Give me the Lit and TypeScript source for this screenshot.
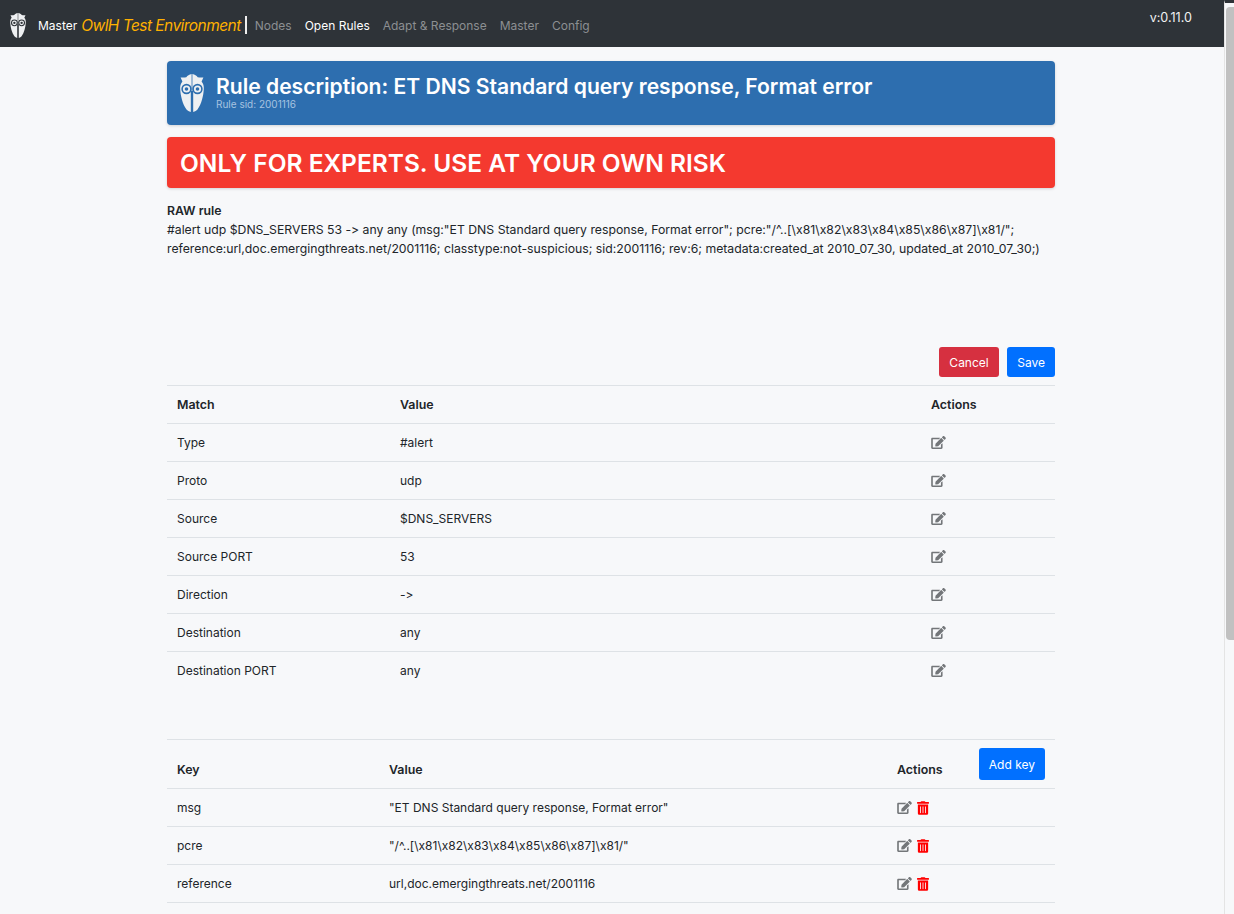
import {LitElement, html, css, svg} from "lit";
import {customElement} from "lit/decorators.js";

const editIcon = html`<svg class="icon edit" viewBox="0 0 576 512"><path fill="currentColor" d="M402.6 83.2l90.2 90.2c3.8 3.8 3.8 10 0 13.8L274.4 405.6l-92.8 10.3c-12.4 1.4-22.9-9.1-21.5-21.5l10.3-92.8L388.8 83.2c3.8-3.8 10-3.8 13.8 0zm162-22.9l-48.8-48.8c-15.2-15.2-39.9-15.2-55.2 0l-35.4 35.4c-3.8 3.8-3.8 10 0 13.8l90.2 90.2c3.8 3.8 10 3.8 13.8 0l35.4-35.4c15.2-15.3 15.2-40 0-55.2zM384 346.2V448H64V128h229.8c3.2 0 6.2-1.3 8.5-3.5l40-40c7.6-7.6 2.2-20.5-8.5-20.5H48C21.5 64 0 85.5 0 112v352c0 26.5 21.5 48 48 48h352c26.5 0 48-21.5 48-48V306.2c0-10.7-12.9-16-20.5-8.5l-40 40c-2.2 2.3-3.5 5.3-3.5 8.5z"/></svg>`;

const trashIcon = html`<svg class="icon trash" viewBox="0 0 448 512"><path fill="currentColor" d="M32 464a48 48 0 0 0 48 48h288a48 48 0 0 0 48-48V128H32zm272-256a16 16 0 0 1 32 0v224a16 16 0 0 1-32 0zm-96 0a16 16 0 0 1 32 0v224a16 16 0 0 1-32 0zm-96 0a16 16 0 0 1 32 0v224a16 16 0 0 1-32 0zM432 32H312l-9.4-18.7A24 24 0 0 0 281.1 0H166.8a23.72 23.72 0 0 0-21.4 13.3L136 32H16A16 16 0 0 0 0 48v32a16 16 0 0 0 16 16h416a16 16 0 0 0 16-16V48a16 16 0 0 0-16-16z"/></svg>`;

// owl helmet, bg is the colour behind it so the eyes and slit look cut out
const owlHalf = (bg: string) => svg`
  <path fill="#eef0f2" d="M11.6 0C9.2 0.4 7.5 1.6 6.3 3.2C4.5 3.6 2.5 3.6 0.6 3.4L2.4 7.4C0.6 9.5 0 12 0.2 15C0.6 22 2.5 30 6.5 35.5C7.5 36.8 9 37.5 10.8 38V17H11.6z"/>
  <circle cx="6.5" cy="15" r="5.2" fill=${bg}/>
  <circle cx="6.5" cy="15" r="3.6" fill="#eef0f2"/>
  <circle cx="6.5" cy="15" r="1.8" fill=${bg}/>
`;

const owl = (cls: string, bg: string) => html`<svg class=${cls} viewBox="0 0 24 38">
  ${owlHalf(bg)}
  ${svg`<g transform="translate(24) scale(-1 1)">${owlHalf(bg)}</g>`}
</svg>`;

const matches = [
  ["Type", "#alert"],
  ["Proto", "udp"],
  ["Source", "$DNS_SERVERS"],
  ["Source PORT", "53"],
  ["Direction", "->"],
  ["Destination", "any"],
  ["Destination PORT", "any"],
];

const keys = [
  ["msg", `"ET DNS Standard query response, Format error"`],
  ["pcre", `"/^..[\\x81\\x82\\x83\\x84\\x85\\x86\\x87]\\x81/"`],
  ["reference", "url,doc.emergingthreats.net/2001116"],
];

@customElement("app-root")
export class AppRoot extends LitElement {
  static styles = css`
    :host {
      display: block;
      height: 914px;
      overflow: hidden;
      background: #f7f8fa;
      color: #212529;
      font-family: Inter, "Liberation Sans", sans-serif;
      font-size: 12px;
      line-height: 19px;
      font-variant-ligatures: none;
      font-feature-settings: "calt" 0;
    }
    .page {
      width: 1224px;
    }
    .nav {
      display: flex;
      align-items: center;
      box-sizing: border-box;
      height: 47px;
      padding: 3px 0 0 10px;
      background: #2e3338;
      color: #fff;
    }
    .nav-owl {
      width: 16px;
      height: 25px;
      margin-right: 12px;
    }
    .env {
      font-style: italic;
      font-size: 15.5px;
      letter-spacing: -0.55px;
      color: #ffb000;
      margin-left: 4px;
    }
    .sep {
      margin: 0 8px 0 4px;
      width: 2px;
      height: 18px;
      background: #eee;
    }
    .link {
      color: #8c8f92;
      margin-right: 13px;
    }
    .link.active {
      color: #fff;
    }
    .version {
      margin-left: auto;
      margin-right: 32px;
      margin-top: -15px;
      font-size: 12.6px;
      color: #f2f2f2;
    }
    .content {
      width: 888px;
      margin-left: 167px;
      padding-top: 14px;
    }
    .banner {
      display: flex;
      align-items: center;
      height: 64px;
      background: #2d6eaf;
      border-radius: 4px;
      box-shadow: 0 1px 3px rgba(0, 0, 0, 0.15);
      padding-left: 13px;
      color: #fff;
    }
    .banner-owl {
      width: 24px;
      height: 38px;
      margin-right: 12px;
    }
    .banner h1 {
      margin: -2px 0 0;
      font-size: 21.1px;
      font-weight: 600;
      line-height: 24px;
    }
    .banner small {
      display: block;
      font-size: 10px;
      line-height: 11px;
      color: #a6c3e0;
    }
    .warning {
      margin-top: 12px;
      box-sizing: border-box;
      height: 51px;
      display: flex;
      align-items: center;
      padding: 1px 0 0 13px;
      background: #f4392f;
      border-radius: 4px;
      color: #fff;
      font-size: 24.5px;
      font-weight: 600;
      box-shadow: 0 1px 3px rgba(0, 0, 0, 0.15);
    }
    .raw {
      margin-top: 13px;
      height: 146px;
      font-size: 12.25px;
    }
    .raw b {
      display: block;
      font-weight: 600;
    }
    .toolbar {
      display: flex;
      justify-content: flex-end;
      gap: 8px;
      margin-bottom: 8px;
    }
    .btn {
      display: inline-flex;
      align-items: center;
      height: 30px;
      padding: 0 10px;
      border: none;
      border-radius: 3px;
      color: #fff;
      font: inherit;
    }
    .btn.red {
      background: #d63040;
      padding: 0 10.5px;
    }
    .btn.blue {
      background: #0170ff;
    }
    table {
      width: 100%;
      border-collapse: collapse;
      table-layout: fixed;
    }
    th,
    td {
      height: 37px;
      padding: 0 10px;
      border-top: 1px solid #dee2e6;
      text-align: left;
      vertical-align: middle;
    }
    th {
      font-weight: 600;
      font-size: 12.4px;
    }
    .keys {
      margin-top: 50px;
      border-bottom: 1px solid #dee2e6;
    }
    .keys th {
      box-sizing: border-box;
      height: 49px;
      padding-top: 10px;
      position: relative;
    }
    .add {
      position: absolute;
      top: 8px;
      right: 10px;
      height: 32px;
      font-size: 12px;
      font-weight: 400;
    }
    .icon {
      display: inline-block;
      vertical-align: middle;
      height: 13px;
      margin-top: -2px;
    }
    .edit {
      width: 15px;
      color: #737679;
    }
    .trash {
      width: 12px;
      height: 14px;
      margin-left: 5px;
      color: #ff0000;
    }
    .scrollbar {
      position: fixed;
      top: 0;
      right: 0;
      width: 10px;
      height: 914px;
      background: #f7f8fa;
      border-left: 1px solid #e4e4e4;
      border-top: 3px solid #2e3338;
      box-sizing: border-box;
    }
    .thumb {
      margin: 4px 0 0 1px;
      width: 8px;
      height: 633px;
      border-radius: 4px 0 0 4px;
      background: #c1c1c1;
    }
  `;

  render() {
    return html`
      <div class="page">
        <div class="nav">
          ${owl("nav-owl", "#2e3338")}
          <span>Master</span>
          <span class="env">OwlH Test Environment</span>
          <span class="sep"></span>
          <span class="link">Nodes</span>
          <span class="link active">Open Rules</span>
          <span class="link">Adapt &amp; Response</span>
          <span class="link">Master</span>
          <span class="link">Config</span>
          <span class="version">v:0.11.0</span>
        </div>
        <div class="content">
          <div class="banner">
            ${owl("banner-owl", "#2d6eaf")}
            <div>
              <h1>Rule description: ET DNS Standard query response, Format error</h1>
              <small>Rule sid: 2001116</small>
            </div>
          </div>
          <div class="warning">ONLY FOR EXPERTS. USE AT YOUR OWN RISK</div>
          <div class="raw">
            <b>RAW rule</b>
            #alert udp $DNS_SERVERS 53 -> any any (msg:"ET DNS Standard query response, Format error"; pcre:"/^..[\\x81\\x82\\x83\\x84\\x85\\x86\\x87]\\x81/"; reference:url,doc.emergingthreats.net/2001116; classtype:not-suspicious; sid:2001116; rev:6; metadata:created_at 2010_07_30, updated_at 2010_07_30;)
          </div>
          <div class="toolbar">
            <button class="btn red">Cancel</button>
            <button class="btn blue">Save</button>
          </div>
          <table>
            <colgroup><col style="width:223px" /><col style="width:531px" /><col /></colgroup>
            <tr><th>Match</th><th>Value</th><th>Actions</th></tr>
            ${matches.map(([k, v]) => html`<tr><td>${k}</td><td>${v}</td><td>${editIcon}</td></tr>`)}
          </table>
          <table class="keys">
            <colgroup><col style="width:212px" /><col style="width:508px" /><col /></colgroup>
            <tr>
              <th>Key</th>
              <th>Value</th>
              <th>Actions<button class="btn blue add">Add key</button></th>
            </tr>
            ${keys.map(([k, v]) => html`<tr><td>${k}</td><td>${v}</td><td>${editIcon}${trashIcon}</td></tr>`)}
          </table>
        </div>
      </div>
      <div class="scrollbar"><div class="thumb"></div></div>
    `;
  }
}
